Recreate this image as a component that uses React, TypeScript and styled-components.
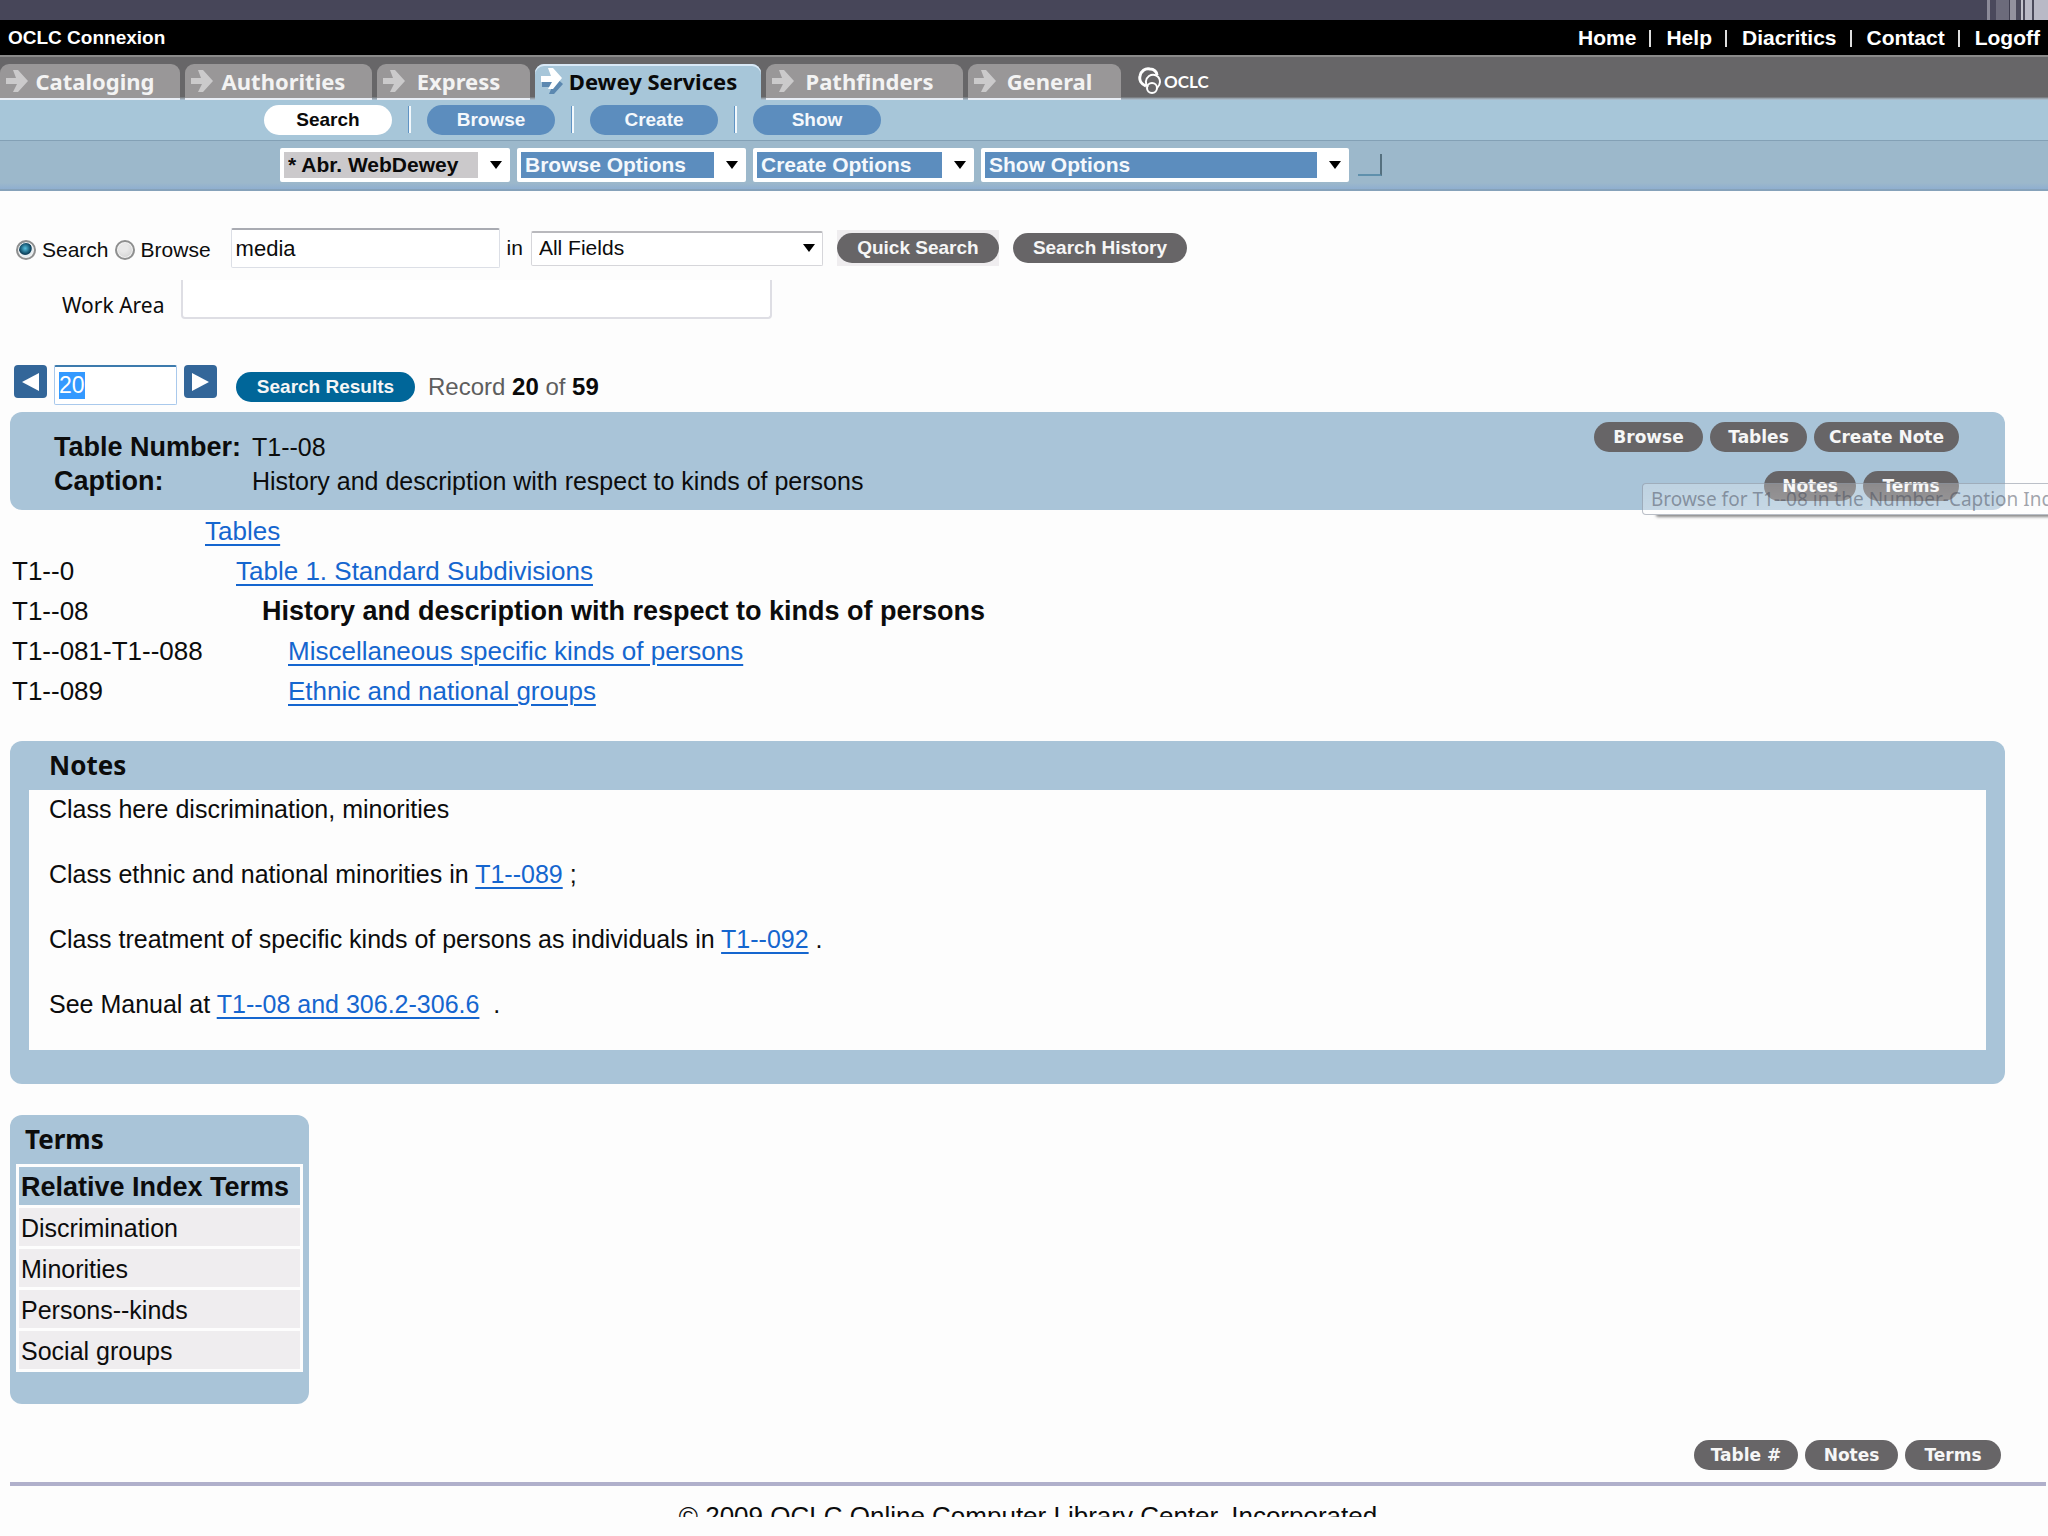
import React, { useEffect, useRef, useState } from "react";
import styled, { createGlobalStyle } from "styled-components";

const arial = `"Liberation Sans", Arial, sans-serif`;
const humanist = `"Noto Sans", "Open Sans", sans-serif`;
const wide = `"DejaVu Sans", Verdana, sans-serif`;

const GlobalStyle = createGlobalStyle`
  *, *::before, *::after { box-sizing: border-box; }
  body { margin: 0; background: #fdfdfd; color: #0c0c0c; font-family: ${arial}; }
  h2, p, ul, dl, dd { margin: 0; padding: 0; }
  button, input, select { font: inherit; color: inherit; margin: 0; }
`;

const Page = styled.div`
  overflow-x: clip;
`;

const WindowStrip = styled.div`
  height: 20px;
  display: flex;
  justify-content: flex-end;
  background: #474659;
`;

const Stripe = styled.span<{ $w: number; $c: string }>`
  width: ${(p) => p.$w}px;
  background: ${(p) => p.$c};
`;

const BrandBar = styled.header`
  display: flex;
  justify-content: space-between;
  align-items: center;
  height: 35px;
  padding: 0 8px;
  background: #000;
  color: #fff;
  font-weight: bold;
`;

const Brand = styled.span`
  font-size: 19px;
`;

const UtilityNav = styled.nav`
  display: flex;
  align-items: center;
  font-size: 21px;
`;

const UtilityLink = styled.a`
  color: #fff;
  text-decoration: none;
  & + &::before {
    content: "";
    display: inline-block;
    width: 2px;
    height: 17px;
    margin: 0 15px 0 13px;
    background: #ddd;
    vertical-align: -2px;
  }
`;

const TabBar = styled.nav`
  display: flex;
  align-items: flex-end;
  gap: 5px;
  height: 45px;
  border-top: 2px solid #8a8a8a;
  background: linear-gradient(#676668 40px, #8f979e 41px, #b0c4d6);
`;

const Tab = styled.a<{ $w: number; $active?: boolean }>`
  display: flex;
  align-items: center;
  min-width: ${(p) => p.$w}px;
  height: 36px;
  padding: 0 20px 0 6px;
  border-radius: 9px 9px 0 0;
  border-bottom: 2px solid ${(p) => (p.$active ? "#a7c6d9" : "#e9eef6")};
  box-shadow: ${(p) => (p.$active ? "inset 0 2px 0 #d9e9f6" : "none")};
  background: ${(p) => (p.$active ? "#a7c6d9" : "#999798")};
  color: ${(p) => (p.$active ? "#0a0a0a" : "#f3f3f3")};
  font: bold 22px ${humanist};
  text-decoration: none;
  white-space: nowrap;
`;

const TabLabel = styled.span`
  flex: 1;
  text-align: center;
`;

const LogoBox = styled.span`
  display: flex;
  align-items: center;
  gap: 1px;
  height: 36px;
  padding: 0 0 2px 12px;
  color: #fff;
  font: bold 17px Lato, sans-serif;
`;

const SubNav = styled.nav`
  display: flex;
  align-items: center;
  height: 41px;
  padding: 0 0 1px 264px;
  background: #a7c6d9;
  border-bottom: 1px solid #83a0b5;
`;

const SubItem = styled.button<{ $active?: boolean }>`
  min-width: 128px;
  height: 30px;
  padding: 0;
  border: 0;
  border-radius: 15px;
  background: ${(p) => (p.$active ? "#fff" : "#5c8dbe")};
  color: ${(p) => (p.$active ? "#0a0a0a" : "#f4f8fc")};
  font-weight: bold;
  font-size: 19px;
`;

const SubDivider = styled.span`
  width: 3px;
  height: 27px;
  margin: 0 16px;
  border-left: 1px solid #5f93c4;
  background: #f2f8fc;
`;

const OptionsBar = styled.div`
  display: flex;
  align-items: center;
  gap: 7px;
  height: 50px;
  padding: 0 0 0 280px;
  background: linear-gradient(#9cb8cb 42px, #8fafd0);
  border-bottom: 2px solid #86a2ba;
`;

const SelectWrap = styled.span<{ $w: number }>`
  position: relative;
  display: flex;
  width: ${(p) => p.$w}px;
`;

const SelectArrow = styled.svg`
  position: absolute;
  right: 8px;
  top: 50%;
  margin-top: -4px;
  pointer-events: none;
`;

const OptionSelect = styled.select<{ $fill: string; $ink: string }>`
  appearance: none;
  width: 100%;
  height: 34px;
  padding: 0 32px 2px 4px;
  border: 4px solid #fff;
  border-radius: 2px;
  background: linear-gradient(to right, ${(p) => p.$fill} calc(100% - 28px), #fff 0);
  color: ${(p) => p.$ink};
  font-weight: bold;
  font-size: 21px;
`;

const CornerMark = styled.span`
  width: 24px;
  height: 22px;
  margin-left: 2px;
  border-right: 2px solid #55707f;
  border-bottom: 2px solid #5f90ac;
`;

const SearchForm = styled.form`
  padding: 37px 0 0 16px;
  font-size: 21px;
`;

const SearchRow = styled.div`
  display: flex;
  align-items: center;
  height: 40px;
`;

const ModeLabel = styled.label`
  display: flex;
  align-items: center;
  gap: 6px;
  margin-right: 6px;
  padding-top: 4px;
`;

const Radio = styled.input`
  appearance: none;
  width: 20px;
  height: 20px;
  border: 2px solid #8e8f8f;
  border-radius: 50%;
  background: radial-gradient(circle at 40% 35%, #e8e8e8 0 30%, #c9c9c9);
  box-shadow: inset 0 0 0 1px #f4f4f4;
  &:checked {
    background: radial-gradient(circle at 45% 40%, #58c2e0 0, #14536f 5px, #0e3e58 6px, #e4ecf0 7px);
  }
`;

const TextBox = styled.input<{ $w: number }>`
  width: ${(p) => p.$w}px;
  height: 40px;
  padding: 0 4px;
  border: 1px solid #dcdfe6;
  border-top: 2px solid #a9abb2;
  border-radius: 2px;
  background: #fff;
  font-size: 22px;
`;

const QueryBox = styled(TextBox)`
  margin-left: 14px;
`;

const InLabel = styled.label`
  margin: 0 8px 0 7px;
`;

const FieldSelect = styled.select`
  appearance: none;
  width: 100%;
  height: 35px;
  padding: 0 32px 2px 7px;
  border: 1px solid #d6d6da;
  border-top: 2px solid #b9b9bd;
  border-radius: 2px;
  background: #fff;
`;

const Pill = styled.button<{ $bg?: string; $w: number }>`
  min-width: ${(p) => p.$w}px;
  height: 30px;
  padding: 0;
  border: 0;
  border-radius: 15px;
  background: ${(p) => p.$bg ?? "#676567"};
  color: #f6f6f6;
  font-weight: bold;
  font-size: 19px;
`;

const PillPlate = styled.span`
  display: flex;
  margin: 0 14px;
  padding: 3px 0;
  background: #efedef;
`;

const WorkRow = styled.div`
  display: flex;
  align-items: center;
  margin-top: 12px;
  padding-left: 46px;
  font: 21px ${humanist};
`;

const WorkLabel = styled.label`
  width: 119px;
  padding-top: 10px;
`;

const WorkBox = styled.input`
  width: 591px;
  height: 39px;
  border: 2px solid #dedee4;
  border-top: 0;
  border-radius: 0 0 4px 4px;
  background: #fff;
`;

const Content = styled.main`
  padding: 46px 2px 0 10px;
`;

const Pager = styled.div`
  display: flex;
  align-items: flex-start;
  height: 47px;
  padding-left: 4px;
`;

const Step = styled.button`
  display: flex;
  align-items: center;
  justify-content: center;
  width: 33px;
  height: 33px;
  padding: 0;
  border: 0;
  border-radius: 4px;
  background: #336699;
`;

const PageBox = styled.input`
  width: 123px;
  height: 40px;
  margin: 0 7px;
  padding: 0 4px;
  border: 1px solid #a9c9ec;
  border-top: 2px solid #3d7bad;
  border-radius: 2px;
  background: #fff;
  font-size: 23px;
  line-height: 31px;
  outline: 0;
  &::selection {
    background: #3399ff;
    color: #fff;
  }
`;

const PagerInfo = styled.div`
  display: flex;
  align-items: center;
  gap: 13px;
  margin: 7px 0 0 19px;
`;

const RecordText = styled.span`
  color: #5e5e5e;
  font-size: 24px;
  line-height: 28px;
  b {
    color: #0a0a0a;
  }
`;

const Panel = styled.section`
  position: relative;
  margin-right: 41px;
  border-radius: 12px;
  background: #a9c4d8;
`;

const RecordPanel = styled(Panel)`
  display: flex;
  justify-content: space-between;
  height: 98px;
  padding: 10px 46px 0 44px;
`;

const Facts = styled.dl`
  display: grid;
  grid-template-columns: 198px auto;
  align-content: start;
  padding-top: 8px;
  line-height: 34px;
  font-size: 25px;
  dt {
    font-weight: bold;
    font-size: 27px;
    white-space: nowrap;
  }
`;

const ActionRows = styled.div`
  display: flex;
  flex-direction: column;
  gap: 19px;
`;

const ActionRow = styled.div`
  display: flex;
  justify-content: flex-end;
  gap: 7px;
`;

const ActionPill = styled(Pill)`
  font-family: ${wide};
  font-size: 17px;
`;

const Tooltip = styled.div`
  position: absolute;
  left: calc(100% - 363px);
  top: 71px;
  height: 32px;
  padding: 0 8px;
  border: 1px solid rgba(120, 130, 145, 0.5);
  border-radius: 4px;
  background: linear-gradient(rgba(255, 255, 255, 0.25), rgba(255, 255, 255, 0.35));
  box-shadow: 12px 4px 3px -2px rgba(60, 60, 60, 0.6);
  clip-path: inset(0 -20px -10px 0);
  color: rgba(70, 75, 90, 0.5);
  font: 19px/30px ${humanist};
  white-space: nowrap;
`;

const Tree = styled.ul`
  list-style: none;
  padding-top: 1px;
  font-size: 26px;
  line-height: 40px;
  b {
    font-size: 27px;
  }
`;

const TreeRow = styled.li`
  display: grid;
  grid-template-columns: 193px 1fr;
  padding-left: 2px;
  height: 40px;
`;

const TreeLabel = styled.span<{ $indent: number }>`
  padding-left: ${(p) => p.$indent}px;
`;

const Link = styled.a`
  color: #1566cf;
  text-decoration: underline;
  text-decoration-thickness: 2px;
  text-underline-offset: 4px;
`;

const NotesPanel = styled(Panel)`
  margin-top: 30px;
  padding: 0 19px 34px;
`;

const PanelTitle = styled.h2<{ $inset: number }>`
  padding-left: ${(p) => p.$inset}px;
  font: bold 26px/49px ${humanist};
`;

const NotesBody = styled.div`
  display: flex;
  flex-direction: column;
  gap: 32px;
  padding: 3px 20px 29px;
  background: #fdfdfd;
  font-size: 25px;
  line-height: 33px;
`;

const TermsPanel = styled(Panel)`
  width: fit-content;
  min-width: 299px;
  margin-top: 31px;
  padding: 0 6px 32px;
`;

const TermsTable = styled.table`
  width: 100%;
  border-spacing: 3px;
  background: #fdfdfd;
  font-size: 25px;
  th,
  td {
    height: 38px;
    padding: 2px 2px 0;
    text-align: left;
    white-space: nowrap;
    background: #efedef;
  }
  th {
    background: #a9c4d8;
    font-size: 27px;
  }
`;

const JumpRow = styled(ActionRow)`
  margin: 36px 45px 12px 0;
`;

const Footer = styled.footer`
  height: 35px;
  overflow: hidden;
  border-top: 4px solid #b0b0cb;
  font-size: 26px;
  line-height: 60px;
  text-align: center;
`;

const TabArrow = ({ active }: { active?: boolean }) => (
  <svg width="24" height="28" viewBox="0 0 24 28" aria-hidden="true">
    {active && <path d="M1 13h8l4-4 9 8-9 10H8l3-7H1z" fill="#5c88b0" />}
    <path
      d={active ? "M0 9h10L7 1h5l9 10-9 11H7l4-7H0z" : "M0 11h10L7 3h5l10 11-10 11H7l4-8H0z"}
      fill={active ? "#fff" : "#cbcacb"}
    />
  </svg>
);

const DropArrow = () => (
  <SelectArrow width="12" height="8" viewBox="0 0 12 8" aria-hidden="true">
    <path d="M0 0h12L6 8z" fill="#000" />
  </SelectArrow>
);

const stripes: [number, string][] = [
  [3, "#8c8b99"], [6, "#4a495c"], [13, "#6c6b7b"], [1, "#3e3d4e"], [6, "#93929e"], [5, "#4b4a5b"],
  [2, "#c2c2cc"], [2, "#4b4a5b"], [7, "#b9b9c6"], [2, "#4b4a5b"], [14, "#b9b9c6"],
];

const tabs = [
  { label: "Cataloging", w: 180 },
  { label: "Authorities", w: 187 },
  { label: "Express", w: 153 },
  { label: "Dewey Services", w: 226, active: true },
  { label: "Pathfinders", w: 197 },
  { label: "General", w: 153 },
];

const options = [
  { label: "* Abr. WebDewey", w: 230, fill: "#cbc9cb", ink: "#0a0a0a" },
  { label: "Browse Options", w: 229, fill: "#5c8dbe", ink: "#f4f8fc" },
  { label: "Create Options", w: 221, fill: "#5c8dbe", ink: "#f4f8fc" },
  { label: "Show Options", w: 368, fill: "#5c8dbe", ink: "#f4f8fc" },
];

const tree = [
  { code: "", label: "Tables", indent: 0 },
  { code: "T1--0", label: "Table 1. Standard Subdivisions", indent: 31 },
  { code: "T1--08", label: "History and description with respect to kinds of persons", indent: 57, current: true },
  { code: "T1--081-T1--088", label: "Miscellaneous specific kinds of persons", indent: 83 },
  { code: "T1--089", label: "Ethnic and national groups", indent: 83 },
];

const terms = ["Discrimination", "Minorities", "Persons--kinds", "Social groups"];

export default function App() {
  const [mode, setMode] = useState("search");
  const pageBox = useRef<HTMLInputElement>(null);

  useEffect(() => {
    pageBox.current?.focus();
    pageBox.current?.select();
  }, []);

  return (
    <Page>
      <GlobalStyle />
      <WindowStrip>
        {stripes.map(([w, c], i) => (
          <Stripe key={i} $w={w} $c={c} />
        ))}
      </WindowStrip>
      <BrandBar>
        <Brand>OCLC Connexion</Brand>
        <UtilityNav>
          {["Home", "Help", "Diacritics", "Contact", "Logoff"].map((t) => (
            <UtilityLink key={t} href="#">{t}</UtilityLink>
          ))}
        </UtilityNav>
      </BrandBar>
      <TabBar>
        {tabs.map((t) => (
          <Tab key={t.label} href="#" $w={t.w} $active={t.active}>
            <TabArrow active={t.active} />
            <TabLabel>{t.label}</TabLabel>
          </Tab>
        ))}
        <LogoBox>
          <svg width="25" height="30" viewBox="0 0 25 30" fill="none" stroke="#fff" aria-hidden="true">
            <path d="M8 20C3 18 1 14 2 10c1-5 5-8 10-7 4 0 7 3 7 6" strokeWidth="3" />
            <path d="M10 21c-3-3-3-8 1-11 5-3 11 0 11 6 0 2-1 4-3 6" strokeWidth="2" />
            <circle cx="14" cy="22" r="5" strokeWidth="2" />
          </svg>
          <span>OCLC</span>
        </LogoBox>
      </TabBar>
      <SubNav>
        {["Search", "Browse", "Create", "Show"].map((t, i) => (
          <React.Fragment key={t}>
            {i > 0 && <SubDivider />}
            <SubItem type="button" $active={i === 0}>{t}</SubItem>
          </React.Fragment>
        ))}
      </SubNav>
      <OptionsBar>
        {options.map((o) => (
          <SelectWrap key={o.label} $w={o.w}>
            <OptionSelect aria-label={o.label} $fill={o.fill} $ink={o.ink}>
              <option>{o.label}</option>
            </OptionSelect>
            <DropArrow />
          </SelectWrap>
        ))}
        <CornerMark />
      </OptionsBar>
      <SearchForm onSubmit={(e) => e.preventDefault()}>
        <SearchRow>
          <ModeLabel>
            <Radio type="radio" name="mode" checked={mode === "search"} onChange={() => setMode("search")} />
            Search
          </ModeLabel>
          <ModeLabel>
            <Radio type="radio" name="mode" checked={mode === "browse"} onChange={() => setMode("browse")} />
            Browse
          </ModeLabel>
          <QueryBox $w={269} type="text" aria-label="Search terms" defaultValue="media" />
          <InLabel htmlFor="field">in</InLabel>
          <SelectWrap $w={292}>
            <FieldSelect id="field">
              <option>All Fields</option>
            </FieldSelect>
            <DropArrow />
          </SelectWrap>
          <PillPlate>
            <Pill type="submit" $w={162}>Quick Search</Pill>
          </PillPlate>
          <Pill type="button" $w={174}>Search History</Pill>
        </SearchRow>
        <WorkRow>
          <WorkLabel htmlFor="work">Work Area</WorkLabel>
          <WorkBox id="work" type="text" />
        </WorkRow>
      </SearchForm>
      <Content>
        <Pager>
          <Step type="button" aria-label="Previous record">
            <svg width="17" height="18" viewBox="0 0 17 18"><path d="M17 0v18L0 9z" fill="#fff" /></svg>
          </Step>
          <PageBox ref={pageBox} type="text" aria-label="Record number" defaultValue="20" />
          <Step type="button" aria-label="Next record">
            <svg width="17" height="18" viewBox="0 0 17 18"><path d="M0 0v18l17-9z" fill="#fff" /></svg>
          </Step>
          <PagerInfo>
            <Pill type="button" $bg="#006699" $w={179}>Search Results</Pill>
            <RecordText>Record <b>20</b> of <b>59</b></RecordText>
          </PagerInfo>
        </Pager>
        <RecordPanel>
          <Facts>
            <dt>Table Number:</dt>
            <dd>T1--08</dd>
            <dt>Caption:</dt>
            <dd>History and description with respect to kinds of persons</dd>
          </Facts>
          <ActionRows>
            <ActionRow>
              <ActionPill type="button" $w={109}>Browse</ActionPill>
              <ActionPill type="button" $w={97}>Tables</ActionPill>
              <ActionPill type="button" $w={145}>Create Note</ActionPill>
            </ActionRow>
            <ActionRow>
              <ActionPill type="button" $w={92}>Notes</ActionPill>
              <ActionPill type="button" $w={96}>Terms</ActionPill>
            </ActionRow>
          </ActionRows>
          <Tooltip role="tooltip">Browse for T1--08 in the Number-Caption Index</Tooltip>
        </RecordPanel>
        <Tree>
          {tree.map((r) => (
            <TreeRow key={r.label}>
              <span>{r.code}</span>
              <TreeLabel $indent={r.indent}>
                {r.current ? <b>{r.label}</b> : <Link href="#">{r.label}</Link>}
              </TreeLabel>
            </TreeRow>
          ))}
        </Tree>
        <NotesPanel>
          <PanelTitle $inset={20}>Notes</PanelTitle>
          <NotesBody>
            <p>Class here discrimination, minorities</p>
            <p>Class ethnic and national minorities in <Link href="#">T1--089</Link> ;</p>
            <p>Class treatment of specific kinds of persons as individuals in <Link href="#">T1--092</Link> .</p>
            <p>See Manual at <Link href="#">T1--08 and 306.2-306.6</Link> &nbsp;.</p>
          </NotesBody>
        </NotesPanel>
        <TermsPanel>
          <PanelTitle $inset={9}>Terms</PanelTitle>
          <TermsTable>
            <thead>
              <tr><th scope="col">Relative Index Terms</th></tr>
            </thead>
            <tbody>
              {terms.map((t) => (
                <tr key={t}><td>{t}</td></tr>
              ))}
            </tbody>
          </TermsTable>
        </TermsPanel>
        <JumpRow>
          <ActionPill type="button" $w={104}>Table #</ActionPill>
          <ActionPill type="button" $w={93}>Notes</ActionPill>
          <ActionPill type="button" $w={96}>Terms</ActionPill>
        </JumpRow>
        <Footer>© 2009 OCLC Online Computer Library Center, Incorporated</Footer>
      </Content>
    </Page>
  );
}
